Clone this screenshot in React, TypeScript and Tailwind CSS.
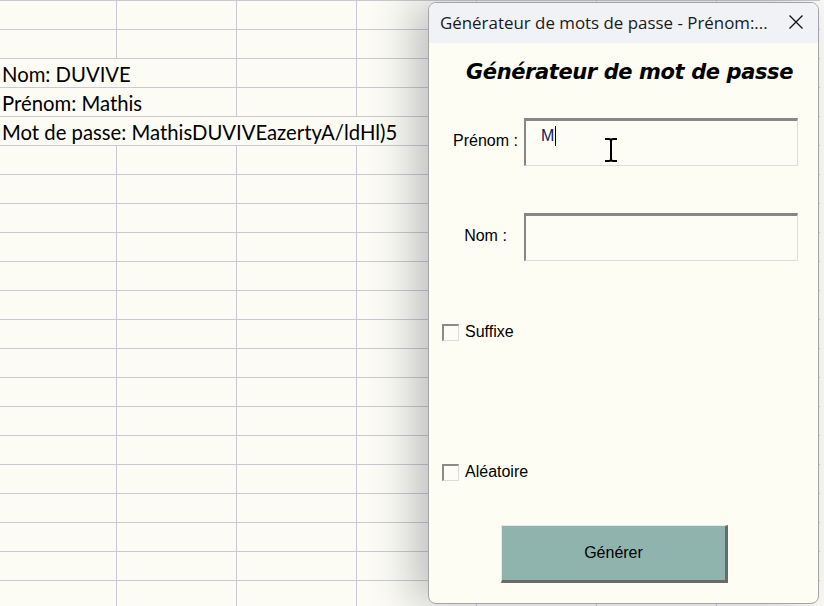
import React from 'react';

const COLS = [117, 120, 120, 120, 120, 120, 120];
const ROWS = 21;

const textRows: Record<number, { text: string; span: number }> = {
  2: { text: 'Nom: DUVIVE', span: 2 },
  3: { text: 'Prénom: Mathis', span: 2 },
  4: { text: 'Mot de passe: MathisDUVIVEazertyA/ldHl)5', span: 4 },
};

const SheetRow: React.FC<{ index: number }> = ({ index }) => {
  const row = textRows[index];
  const cells: React.ReactNode[] = [];
  let c = 0;
  if (row) {
    const w = COLS.slice(0, row.span).reduce((a, b) => a + b, 0);
    cells.push(
      <div
        key="t"
        className="h-full shrink-0 border-r border-[#c9c9d3] pl-[2px] flex items-end pb-[1px] whitespace-nowrap overflow-visible text-[20.3px] leading-[24px] text-black font-['Lato',sans-serif]"
        style={{ width: w }}
      >
        {row.text}
      </div>
    );
    c = row.span;
  }
  for (; c < COLS.length; c++) {
    cells.push(
      <div key={c} className="h-full shrink-0 border-r border-[#c9c9d3]" style={{ width: COLS[c] }} />
    );
  }
  return <div className="flex h-[29px] border-b border-[#c9c9d3]">{cells}</div>;
};

const Checkbox: React.FC<{ label: string }> = ({ label }) => (
  <div className="flex items-center gap-[6px]">
    <div className="w-[17px] h-[17px] bg-[#fdfdf6] border-t-2 border-l-2 border-t-[#8a8a8a] border-l-[#8a8a8a] border-r border-b border-r-[#dcdcdc] border-b-[#dcdcdc]" />
    <span className="text-[16px] leading-[20px] text-black font-['Liberation_Sans',sans-serif]">{label}</span>
  </div>
);

const Field: React.FC<{ label: string; value?: string; caret?: boolean }> = ({ label, value, caret }) => (
  <div className="flex items-center">
    <div className="w-[77px] ml-[5px] mb-[3px] text-center text-[16px] text-black font-['Liberation_Sans',sans-serif]">{label}</div>
    <div className="w-[274px] h-[48px] bg-[#fdfdf6] border-t-[3px] border-l-2 border-t-[#878787] border-l-[#878787] border-r border-b border-r-[#dedede] border-b-[#dedede] flex items-start pt-[5px] pl-[15px]">
      {value && (
        <span className="text-[16px] leading-[20px] text-[#10205a] font-['Liberation_Sans',sans-serif]">{value}</span>
      )}
      {caret && <span className="w-px h-[20px] bg-black ml-[1px]" />}
    </div>
  </div>
);

export default function App() {
  return (
    <div className="relative w-[824px] h-[606px] overflow-hidden bg-[#fcfcf5]">
      <div className="border-t border-[#c9c9d3] w-[820px]">
        {Array.from({ length: ROWS }).map((_, i) => (
          <SheetRow key={i} index={i} />
        ))}
      </div>

      <div className="absolute left-[428px] top-[2px] w-[391px] h-[602px] rounded-[8px] border border-[#a4a4a8] bg-[#fdfdf3] shadow-[-16px_0_40px_rgba(60,60,80,0.3)] overflow-hidden flex flex-col">
        <div className="h-[40px] shrink-0 bg-[#f1f2f6] flex items-center justify-between pl-[11px] pr-[14px]">
          <span className="text-[16.9px] text-[#1a1a1a] font-['Open_Sans',sans-serif] whitespace-nowrap">
            Générateur de mots de passe - Prénom:...
          </span>
          <svg width="16" height="16" viewBox="0 0 16 16" className="mb-[2px]">
            <path d="M1.5 1.5 L14.5 14.5 M14.5 1.5 L1.5 14.5" stroke="#111" strokeWidth="1.3" />
          </svg>
        </div>

        <div className="flex flex-col pl-[13px]">
          <div className="mt-[15px] h-[28px] pl-[24px] text-[21px] leading-[28px] font-bold italic text-black font-['DejaVu_Sans',sans-serif] whitespace-nowrap tracking-[-0.4px]">
            Générateur de mot de passe
          </div>

          <div className="mt-[32px] relative">
            <Field label="Prénom :" value="M" caret />
            <svg className="absolute left-[162px] top-[19px]" width="14" height="26" viewBox="0 0 14 26">
              <path d="M1 2 H5 Q7 2 7 4 Q7 2 9 2 H13 M7 4 V22 M1 24 H5 Q7 24 7 22 Q7 24 9 24 H13" stroke="#000" strokeWidth="2" fill="none" />
            </svg>
          </div>

          <div className="mt-[47px]">
            <Field label="Nom :" />
          </div>

          <div className="mt-[61px]">
            <Checkbox label="Suffixe" />
          </div>

          <div className="mt-[120px]">
            <Checkbox label="Aléatoire" />
          </div>

          <div className="mt-[43px] ml-[59px]">
            <button className="w-[227px] h-[58px] bg-[#8fb4ae] border-t border-l border-t-[#e8e8e8] border-l-[#e8e8e8] border-r-[3px] border-b-[3px] border-r-[#6a6a6a] border-b-[#6a6a6a] text-[16px] text-black font-['Liberation_Sans',sans-serif]">
              Générer
            </button>
          </div>
        </div>
      </div>
    </div>
  );
}
